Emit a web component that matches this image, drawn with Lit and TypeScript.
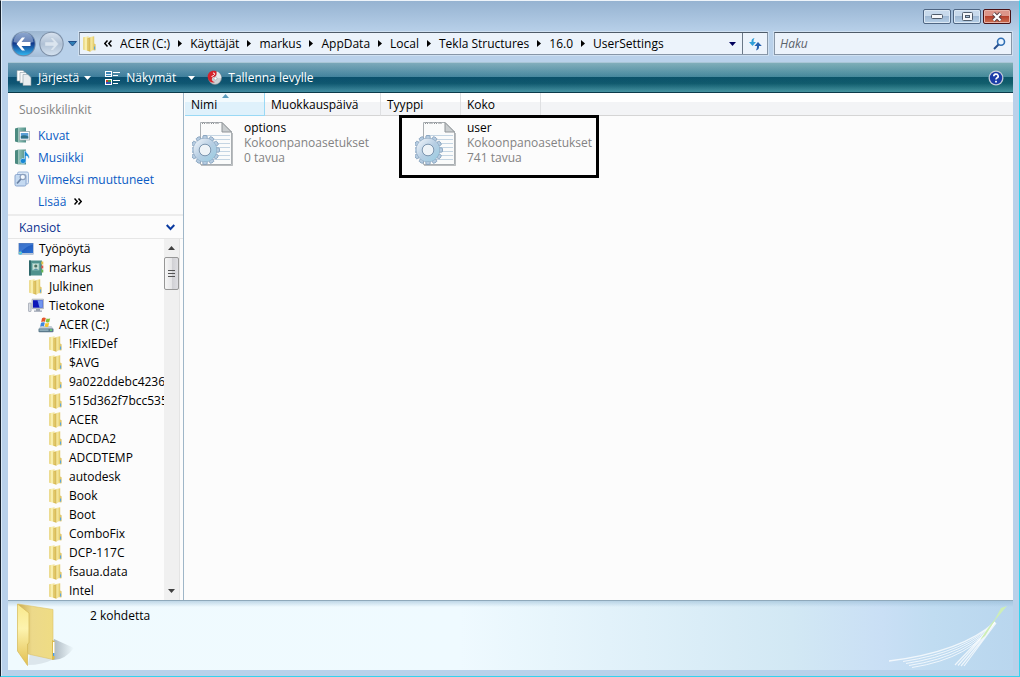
import { LitElement, html, svg, css, nothing } from "lit";
import { customElement, state } from "lit/decorators.js";
import { classMap } from "lit/directives/class-map.js";

interface TreeNode {
  label: string;
  level: number;
  icon: string;
}

interface FileEntry {
  name: string;
  type: string;
  size: string;
  marked: boolean;
}

const CRUMBS = ["ACER (C:)", "Käyttäjät", "markus", "AppData", "Local", "Tekla Structures", "16.0", "UserSettings"];

const folderNames = [
  "!FixIEDef", "$AVG", "9a022ddebc42365", "515d362f7bcc5357", "ACER", "ADCDA2", "ADCDTEMP",
  "autodesk", "Book", "Boot", "ComboFix", "DCP-117C", "fsaua.data", "Intel",
];

const TREE: TreeNode[] = [
  { label: "Työpöytä", level: 0, icon: "desktop" },
  { label: "markus", level: 1, icon: "user" },
  { label: "Julkinen", level: 1, icon: "folder" },
  { label: "Tietokone", level: 1, icon: "computer" },
  { label: "ACER (C:)", level: 2, icon: "drive" },
  ...folderNames.map((label) => ({ label, level: 3, icon: "folder" })),
];

const LINKS = [
  { label: "Kuvat", icon: "pictures" },
  { label: "Musiikki", icon: "music" },
  { label: "Viimeksi muuttuneet", icon: "recent" },
];

const FILES: FileEntry[] = [
  { name: "options", type: "Kokoonpanoasetukset", size: "0 tavua", marked: false },
  { name: "user", type: "Kokoonpanoasetukset", size: "741 tavua", marked: true },
];

const GLYPHS: Record<string, unknown> = {
  folder: svg`
    <path d="M1.2 1.2 L6.5 .3 V15 L1.2 13.8z" fill="url(#foldA)"/>
    <path d="M8 1 L12.200 .3 V13.500 L8 15.700z" fill="url(#foldB)"/>
    <path d="M5.500 2.200 L8.300 1.200 V15.700 L5.500 14.700z" fill="#d2b147"/>
    <path d="M6.500 2.400 L7.300 2.100 V14.800 L6.500 14.600z" fill="#eddb8a"/>
    <path d="M12 7.500 L13.600 8.300 V14.200 L11.600 14.600z" fill="#e0c66a"/>
    <path d="M12 10.500 h1.100 v3 h-1.100z" fill="#5aa7dd"/>`,
  desktop: svg`
    <rect x=".5" y="2" width="15" height="11.5" fill="#7790b8"/>
    <rect x="1" y="2.5" width="14" height="10" fill="url(#screen)"/>
    <path d="M1 12.5 C5 9 9 5 15 3.5 V2.5 H1z" fill="#5f9ae6" opacity=".45"/>
    <rect x="1" y="12" width="14" height="1.5" fill="#b9c5d6"/>
    <circle cx="2.5" cy="12" r="1.8" fill="#47c0e8"/><circle cx="2" cy="11.6" r=".7" fill="#f2d24a"/>`,
  user: svg`
    <rect x="1" y=".5" width="13" height="15" fill="#4f918d"/>
    <rect x="1" y=".5" width="2" height="15" fill="#2f686b"/>
    <rect x="4.500" y="3.500" width="6.500" height="6.500" fill="#c9dfd6" stroke="#8fc1bb" stroke-width=".8"/>
    <circle cx="7.800" cy="6" r="1.600" fill="#4a7262"/><path d="M5.5 10 Q8 6.8 10.2 10z" fill="#5d97a8"/>
    <rect x="13.300" y="1.5" width="2" height="3" fill="#e8c24a"/>
    <rect x="13.300" y="5.5" width="2" height="3" fill="#d95a4a"/>
    <rect x="13.300" y="9.5" width="2" height="3" fill="#67b654"/>`,
  computer: svg`
    <rect x=".5" y="5" width="2.600" height="8.500" rx=".6" fill="#d7dbe2" stroke="#8a92a0" stroke-width=".6"/>
    <rect x="4" y="1.200" width="11.700" height="9.500" rx=".6" fill="#d3d6dd" stroke="#8a92a0" stroke-width=".6"/>
    <rect x="5" y="2.200" width="9.700" height="7.500" fill="#0d16b8"/>
    <path d="M9.500 2.200 H14.700 V9.700 H11.500z" fill="#6f95ee"/>
    <path d="M8 11 h4 v1.5 h2 v1.3 h-8 v-1.3 h2z" fill="#9ba3b1"/>`,
  drive: svg`
    <path d="M2.5 9 H13.5 L15.5 12 H.5z" fill="#c3cdd6"/>
    <rect x=".5" y="11.5" width="15" height="3.8" rx="1" fill="#5c7a8c"/>
    <rect x="1.5" y="12.4" width="9" height="1.4" fill="#98b6c4"/>
    <rect x="12" y="12.4" width="2" height="1.4" fill="#69e06a"/>
    <path d="M4 1.2 Q5.8 .1 7.8 1.1 L7 4.8 Q5.2 4 3.2 5z" fill="#e4552b"/>
    <path d="M8.5 1.4 Q10.2 2.3 12.2 1.3 L11.3 5 Q9.5 6 7.7 5.1z" fill="#86bf3a"/>
    <path d="M3 5.7 Q5 4.7 6.8 5.6 L6 9.3 Q4.2 8.5 2.2 9.5z" fill="#3e86dd"/>
    <path d="M7.5 5.9 Q9.2 6.8 11.2 5.8 L10.3 9.5 Q8.5 10.5 6.7 9.6z" fill="#f6c52c"/>`,
  pictures: svg`
    <path d="M1 1.5 L4.500 .5 V15.5 L1 14.5z" fill="#4b8a80"/>
    <path d="M4.500 .5 H12 V15.5 H4.500z" fill="url(#teal)"/>
    <rect x="5.5" y="4.5" width="10" height="8.5" fill="#fff" stroke="#9aa8ad" stroke-width=".8"/>
    <rect x="6.8" y="6" width="7.5" height="5.5" fill="#5b9fd6"/>
    <path d="M6.8 9.3 Q10 7.3 14.3 9.6 V11.5 H6.8z" fill="#2f6f86"/>`,
  music: svg`
    <path d="M1 1.5 L4.500 .5 V15.5 L1 14.5z" fill="#4b8a80"/>
    <path d="M4.500 .5 H12 V15.5 H4.500z" fill="url(#teal)"/>
    <path d="M10.500 2 H12 C12 4.500 15.300 4.800 15.300 8.500 L14.300 10 C14.300 7.500 13 7 12 7 V12 A2.900 2.500 0 1 1 10.500 9.800z" fill="#1787d4" stroke="#d9f0ff" stroke-width=".6"/>`,
  recent: svg`
    <rect x="3.500" y="1" width="11" height="12" rx="1.500" fill="#dbe8f7" stroke="#9db6d8"/>
    <rect x="1" y="3.500" width="11" height="11.500" rx="1.500" fill="#c5daf1" stroke="#8aa6cf"/>
    <circle cx="8.800" cy="6" r="2.700" fill="#f5faff" stroke="#8b9fbc" stroke-width="1.200"/>
    <path d="M6.900 8 L3 12.500" stroke="#6b82a4" stroke-width="1.800"/>`,
};

const glyph = (name: string) =>
  html`<svg class="glyph" viewBox="0 0 16 16" aria-hidden="true">${GLYPHS[name]}</svg>`;

const teeth = Array.from({ length: 12 }, (_, i) =>
  svg`<rect x="10.800" y="15.500" width="4.400" height="5" rx="1.200" transform="rotate(${i * 30} 13 30)"/>`);

const configIcon = html`<svg class="config" viewBox="0 0 42 46" aria-hidden="true">
  <path d="M8.500 2.500 H30 L39.500 12 V44.500 H8.500z" fill="#fafbfb" stroke="#a9aeb2"/>
  <path d="M9 45.500 H40.500 V13" fill="none" stroke="#777d82" stroke-opacity=".5"/>
  <path d="M11 15.500 H38 M11 19.500 H38 M11 23.500 H38 M11 27.500 H38 M11 31.500 H38 M11 35.500 H38 M11 39.500 H38" stroke="#c4d5e3"/>
  <path d="M30 2.500 V12 H39.500z" fill="#c9cdcf" stroke="#8f9498"/>
  <path d="M10 4 q1.500 -3 3 0 m1.500 0 q1.500 -3 3 0 m1.500 0 q1.500 -3 3 0 m1.500 0 q1.500 -3 3 0" fill="none" stroke="#8b9094"/>
  <g fill="#b5cbe0" stroke="#7f9cb9" stroke-width=".8">${teeth}</g>
  <circle cx="13" cy="30" r="8.800" fill="none" stroke="#8aa4be" stroke-width="6.200"/>
  <circle cx="13" cy="30" r="8.800" fill="none" stroke="url(#gear)" stroke-width="5.400"/>
  <circle cx="13" cy="30" r="5.800" fill="#eef3f7" stroke="#7e97b0"/>
</svg>`;

const chevrons = (flip: boolean) =>
  html`<svg width="8" height="7" viewBox="0 0 8 7" aria-hidden="true">
    <path d=${flip ? "M3.500 .5 L.8 3.500 L3.500 6.500 M7.500 .5 L4.800 3.500 L7.500 6.500" : "M.5 .5 L3.200 3.500 L.5 6.500 M4.500 .5 L7.200 3.500 L4.500 6.500"} fill="none" stroke="#000" stroke-width="1.500"/>
  </svg>`;

@customElement("app-root")
export class AppRoot extends LitElement {
  @state() private query = "";

  static styles = css`
    :host {
      display: flex;
      flex-direction: column;
      box-sizing: border-box;
      height: 100vh;
      min-height: 320px;
      overflow: hidden;
      background: linear-gradient(#96b3d1, #b9d1ea 32px);
      border: 1px solid #35d3ee;
      border-top-color: #eef4fa;
      border-left-color: #16202c;
      box-shadow: inset 1px 0 #dcebf8;
      padding: 0 6px 6px 7px;
      font: 12px/15px "Open Sans", "Noto Sans", sans-serif;
      color: #000;
    }
    * { box-sizing: border-box; }
    button {
      font: inherit;
      color: inherit;
      background: none;
      border: 0;
      padding: 0;
      margin: 0;
    }
    svg { display: block; flex: none; }
    .defs { width: 0; height: 0; }
    .glyph { width: 16px; height: 16px; }

    .caption { display: flex; justify-content: flex-end; gap: 2px; height: 30px; padding: 8px 2px 0 0; }
    .sys {
      display: grid;
      place-items: center;
      width: 28px;
      height: 15px;
      border: 1px solid #4f6683;
      border-radius: 2px;
      background: linear-gradient(#c8daec 50%, #9fb9d4 50%, #b7d0e8);
      box-shadow: inset 0 0 0 1px #dbe8f4;
    }
    .close {
      border-color: #4a1216;
      background: linear-gradient(#dc9589 50%, #b5402c 50%, #cd7052);
      box-shadow: inset 0 0 0 1px #e8b3a8;
    }

    .nav { display: flex; align-items: center; height: 24px; margin-right: 1px; padding-top: 1px; }
    .travel { display: flex; align-items: center; width: 71px; gap: 4px; padding-left: 3px; }
    .orbs { display: flex; gap: 3px; border-radius: 13px; background: linear-gradient(#9db6d0, #b9d1ea 60%, #a4bcd6); }
    .address {
      display: flex;
      align-items: center;
      flex: 1;
      min-width: 0;
      height: 23px;
      border: 1px solid #8796a7;
      border-top-color: #4e5b69;
      background: #ecf3fb;
      padding-left: 2px;
      box-shadow: 0 0 0 1px #cfe0f1;
    }
    .back-list { margin: 0 8px 0 6px; }
    .crumbs { display: flex; align-items: center; flex: 1; min-width: 0; overflow: hidden; gap: 8px; }
    .crumb { display: flex; align-items: center; gap: 8px; flex: none; white-space: nowrap; }
    .history { width: 20px; height: 21px; display: grid; place-items: center; }
    .refresh { width: 25px; height: 21px; border-left: 1px solid #6a7887; display: grid; place-items: center; }
    .search {
      display: flex;
      align-items: center;
      width: 238px;
      height: 23px;
      margin-left: 6px;
      border: 1px solid #8796a7;
      border-top-color: #4e5b69;
      background: #ecf3fb;
      padding: 0 5px;
      box-shadow: 0 0 0 1px #cfe0f1;
    }
    .search input {
      flex: 1;
      min-width: 0;
      border: 0;
      outline: 0;
      padding: 0;
      background: none;
      font: italic 12px/15px "Open Sans", "Noto Sans", sans-serif;
    }
    .search input::placeholder { color: #5b626a; opacity: 1; }

    .toolbar {
      display: flex;
      align-items: center;
      height: 31px;
      margin-top: 7px;
      padding: 0 9px 0 8px;
      color: #fff;
      border-top: 1px solid #a9c6d6;
      border-bottom: 1px solid #0b3a4a;
      background:
        linear-gradient(90deg, #0a4a8a40, #0a4a8a10 50%, #1a7f6a20),
        linear-gradient(#8bb5c0, #4a8ba0 48%, #0a5068 48%, #10596c 70%, #4b97a4);
      text-shadow: 0 1px 2px #02303f;
    }
    .tool { display: flex; align-items: center; gap: 6px; }
    .tool .caret { margin-left: -1px; }
    .organize { margin-right: 14px; }
    .views { margin-right: 12px; }
    .views .caret { margin-left: 6px; }
    .help { margin-left: auto; }

    .body { display: flex; flex: 1; min-height: 0; background: #fcfcfc; }
    .side { display: flex; flex-direction: column; width: 176px; flex: none; border-right: 1px solid #9fb6c8; }
    .fav-title { margin: 0; padding: 9px 11px 7px; font-size: 12px; font-weight: 400; color: #838383; }
    .links { display: flex; flex-direction: column; padding: 0 0 2px 6px; margin: 0; }
    .link { display: flex; align-items: center; gap: 8px; height: 22px; color: #0a5bc4; text-decoration: none; }
    .more { padding-left: 24px; }
    .folders {
      display: flex;
      align-items: center;
      justify-content: space-between;
      height: 25px;
      padding: 0 8px 0 11px;
      border-top: 2px solid #ececec;
      border-bottom: 1px solid #e6e6e6;
      color: #0a2f8f;
    }
    .tree-wrap { display: flex; flex: 1; min-height: 0; padding-right: 3px; }
    .tree { flex: 1; min-width: 0; overflow: hidden; margin: 0; padding: 0 0 0 10px; list-style: none; }
    .node { display: flex; align-items: center; gap: 5px; height: 19px; white-space: nowrap; }
    .level1 { padding-left: 10px; }
    .level2 { padding-left: 20px; }
    .level3 { padding-left: 30px; }
    .scroll { display: flex; flex-direction: column; width: 16px; background: #f0f0f0; border-right: 1px solid #e4e4e4; }
    .step { height: 18px; display: grid; place-items: center; }
    .thumb {
      height: 33px;
      border: 1px solid #979797;
      border-radius: 2px;
      background: linear-gradient(90deg, #f6f6f6, #e6e6e8 50%, #cfcfd3 50%, #dedee2);
      display: grid;
      place-items: center;
    }
    .down { margin-top: auto; }

    .main { flex: 1; min-width: 0; padding-left: 1px; }
    .heads { width: 100%; table-layout: fixed; border-collapse: separate; border-spacing: 0; }
    .heads th {
      height: 23px;
      padding: 0 6px;
      text-align: left;
      font-weight: 400;
      border-bottom: 1px solid #d5d5d5;
      border-right: 1px solid #dfe0e2;
      background: linear-gradient(#fff 40%, #f3f4f6 40%);
    }
    .heads .rest { border-right: 0; }
    .heads .sorted {
      position: relative;
      background: linear-gradient(#f3fafd 40%, #dff1fb 40%);
      border-color: #9ad9f5;
    }
    .sort { position: absolute; top: 1px; left: 50%; margin-left: -3px; }
    .c80 { width: 80px; }
    .c116 { width: 116px; }
    .files { display: flex; flex-wrap: wrap; gap: 45px; margin: 0; padding: 4px 7px; list-style: none; }
    .file { position: relative; display: flex; gap: 10px; width: 178px; }
    .config { width: 42px; height: 46px; }
    .meta { color: #838383; white-space: nowrap; }
    .name { color: #000; }
    .frame { position: absolute; inset: -5px -6px -12px -16px; border: 3px solid #000; pointer-events: none; }

    .details {
      display: flex;
      align-items: flex-start;
      height: 70px;
      border-top: 1px solid #8fa9bb;
      background:
        linear-gradient(#8fb4d080, #8fb4d000 6px),
        linear-gradient(90deg, #f0fafe, #effaff 45%, #d2e8f4 78%, #c9dff5 87%, #c0dcf1 92%, #b9d6ee);
    }
    .count { margin: 7px auto 0 12px; }
    .big-folder { margin: 2px 0 0 8px; }
    .swoosh { margin: 5px 3px 0 0; }
  `;

  private down(color: string, cls = "") {
    return html`<svg class=${cls} width="7" height="4" viewBox="0 0 7 4" aria-hidden="true"><path d="M0 0 H7 L3.500 4z" fill=${color}/></svg>`;
  }

  private renderNav() {
    return html`
      <nav class="nav">
        <div class="travel">
          <div class="orbs">
            <button aria-label="Takaisin">
              <svg width="25" height="26" viewBox="0 0 25 26">
                <circle cx="12.500" cy="13" r="12.200" fill="#6f88a8"/>
                <circle cx="12.500" cy="13" r="11.200" fill="url(#orb)"/>
                <path d="M2.500 11 A10 10 0 0 1 22.500 11 Q12.500 14 2.500 11z" fill="#fff" opacity=".35"/>
                <path d="M11 6.500 H14 L10.500 11 H19.500 V15 H10.500 L14 19.500 H11 L5.500 13z" fill="#fff"/>
              </svg>
            </button>
            <button aria-label="Eteenpäin">
              <svg width="25" height="26" viewBox="0 0 25 26">
                <circle cx="12.500" cy="13" r="12.200" fill="#7d8fa6"/>
                <circle cx="12.500" cy="13" r="11.200" fill="url(#orbOff)"/>
                <path d="M11 6.500 H14 L19.500 13 L14 19.500 H11 L14.500 15 H6 V11 H14.500z" fill="#dbe5ef" stroke="#b9c8d8" stroke-width=".5"/>
              </svg>
            </button>
          </div>
          <button aria-label="Viimeisimmät sivut">
            <svg width="9" height="6" viewBox="0 0 9 6"><path d="M.5 .5 H8.500 L4.500 5z" fill="#2f7fb5" stroke="#23508a"/></svg>
          </button>
        </div>
        <div class="address">
          ${glyph("folder")}
          <button class="back-list" aria-label="Edelliset">${chevrons(true)}</button>
          <div class="crumbs">
            ${CRUMBS.map((name, i) => html`
              <span class="crumb">
                <button>${name}</button>
                ${i < CRUMBS.length - 1
                  ? html`<svg width="4" height="7" viewBox="0 0 4 7" aria-hidden="true"><path d="M0 0 L4 3.500 L0 7z"/></svg>`
                  : nothing}
              </span>`)}
          </div>
          <button class="history" aria-label="Osoitehistoria">${this.down("#00005c")}</button>
          <button class="refresh" aria-label="Päivitä">
            <svg width="14" height="14" viewBox="0 0 14 14">
              <path d="M6.500 1 Q3.200 1.500 3.500 5 H1 L4.500 9 L8 5 H5.500 Q5.200 3 6.500 1z" fill="#2f9fd8"/>
              <path d="M8 13.500 Q11.500 12.500 11 9 H13.800 L10 5 L6.500 9 H9 Q9.200 11.500 8 13.500z" fill="#2460b0"/>
            </svg>
          </button>
        </div>
        <label class="search">
          <input type="text" aria-label="Haku" placeholder="Haku" .value=${this.query}
            @input=${(e: Event) => { this.query = (e.target as HTMLInputElement).value; }}>
          <svg width="13" height="13" viewBox="0 0 13 13" aria-hidden="true">
            <circle cx="8" cy="4.700" r="3.500" fill="#e9f4ff" stroke="#2f6fb4" stroke-width="1.600"/>
            <path d="M5.500 7.500 L1 12" stroke="#274f8e" stroke-width="2"/>
          </svg>
        </label>
      </nav>`;
  }

  private renderToolbar() {
    return html`
      <div class="toolbar" role="toolbar">
        <button class="tool organize">
          <svg width="16" height="16" viewBox="0 0 16 16" aria-hidden="true">
            <path d="M1 .5 H7 L9 2.500 V11 H1z" fill="#fff" stroke="#8b9aa3" stroke-width=".6"/>
            <path d="M4 2.500 H9.500 L12 5 V13 H4z" fill="#f5f7f8" stroke="#8b9aa3" stroke-width=".6"/>
            <path d="M7 4.500 H12 L15 7.500 V15.500 H7z" fill="#e9edef" stroke="#8b9aa3" stroke-width=".6"/>
          </svg>
          <span>Järjestä</span>${this.down("#fff", "caret")}
        </button>
        <button class="tool views">
          <svg width="15" height="14" viewBox="0 0 15 14" aria-hidden="true">
            <rect width="7" height="6" fill="#fff"/><rect x="1" y="1" width="5" height="4" fill="#3a84b5"/><rect x="1" y="3" width="5" height="1" fill="#e7f3fa"/>
            <rect y="8" width="7" height="6" fill="#fff"/><rect x="1" y="9" width="2" height="2" fill="#d43b2b"/><rect x="3" y="9" width="3" height="2" fill="#3f9a3d"/><rect x="1" y="11" width="5" height="2" fill="#3552b8"/>
            <path d="M8 1.500 H15 M8 4.500 H13 M8 9.500 H15 M8 12.500 H13" stroke="#fff"/>
          </svg>
          <span>Näkymät</span>${this.down("#fff", "caret")}
        </button>
        <button class="tool">
          <svg width="15" height="15" viewBox="0 0 15 15" aria-hidden="true">
            <circle cx="8" cy="8" r="6.500" fill="#cfd3d6" stroke="#7d8488" stroke-width=".6"/>
            <path d="M10 1.500 Q14 3 14.300 8 L9 8z" fill="#e6e9ea"/>
            <path d="M9 1 C3.500 -.5 0 3.500 .8 8 C1.500 11.500 5 13.500 8 12 C4.500 11.500 4 8.500 6 7 C9 7.500 10.500 4 9 1z" fill="#d4232b"/>
            <path d="M6 3 q1.800 -.3 1.500 1.500 q-1 1.500 -3 2" stroke="#fff" fill="none"/>
            <circle cx="8.500" cy="8.500" r="1.500" fill="#fff" stroke="#9aa0a4" stroke-width=".6"/>
          </svg>
          <span>Tallenna levylle</span>
        </button>
        <button class="help" aria-label="Ohje">
          <svg width="16" height="16" viewBox="0 0 16 16">
            <circle cx="8" cy="8" r="7.500" fill="#c5ccd8"/><circle cx="8" cy="8" r="6.200" fill="#1b3da8"/>
            <path d="M5.800 6.200 A2.200 2 0 1 1 8.800 8 Q8 8.400 8 9.600" fill="none" stroke="#fff" stroke-width="1.600"/><rect x="7.100" y="10.800" width="1.800" height="1.700" fill="#fff"/>
          </svg>
        </button>
      </div>`;
  }

  private renderSide() {
    return html`
      <aside class="side">
        <h2 class="fav-title">Suosikkilinkit</h2>
        <div class="links">
          ${LINKS.map((l) => html`<a class="link" href="#">${glyph(l.icon)}<span>${l.label}</span></a>`)}
          <a class="link more" href="#"><span>Lisää</span>${chevrons(false)}</a>
        </div>
        <button class="folders">
          <span>Kansiot</span>
          <svg width="9" height="7" viewBox="0 0 9 7" aria-hidden="true"><path d="M.7 1 L4.500 5 L8.300 1" fill="none" stroke="#0a3aa0" stroke-width="2"/></svg>
        </button>
        <div class="tree-wrap">
          <ul class="tree">
            ${TREE.map((n) => html`
              <li class=${classMap({ node: true, level1: n.level === 1, level2: n.level === 2, level3: n.level === 3 })}>
                ${glyph(n.icon)}<span>${n.label}</span>
              </li>`)}
          </ul>
          <div class="scroll">
            <button class="step" aria-label="Vieritä ylös"><svg width="7" height="4" viewBox="0 0 7 4"><path d="M0 4 H7 L3.500 0z" fill="#404040"/></svg></button>
            <div class="thumb"><svg width="7" height="8" viewBox="0 0 7 8"><path d="M0 .5 H7 M0 3.500 H7 M0 6.500 H7" stroke="#555"/></svg></div>
            <button class="step down" aria-label="Vieritä alas">${this.down("#404040")}</button>
          </div>
        </div>
      </aside>`;
  }

  render() {
    return html`
      <svg class="defs" aria-hidden="true"><defs>
        <linearGradient id="foldA"><stop offset="0" stop-color="#e6cf6e"/><stop offset=".5" stop-color="#fbf3b8"/><stop offset="1" stop-color="#efdc86"/></linearGradient>
        <linearGradient id="foldB"><stop offset="0" stop-color="#f8efb0"/><stop offset=".6" stop-color="#efdd8a"/><stop offset="1" stop-color="#dfc562"/></linearGradient>
        <linearGradient id="screen" x2="1" y2="1"><stop offset="0" stop-color="#1c4fae"/><stop offset="1" stop-color="#2b6fd4"/></linearGradient>
        <linearGradient id="teal"><stop offset="0" stop-color="#8fc0b4"/><stop offset="1" stop-color="#4f8f88"/></linearGradient>
        <linearGradient id="gear" x2="1" y2="1"><stop offset="0" stop-color="#e6eef6"/><stop offset=".5" stop-color="#b7cee3"/><stop offset="1" stop-color="#9fcde2"/></linearGradient>
        <linearGradient id="orb" x2="0" y2="1"><stop offset="0" stop-color="#4a74b4"/><stop offset=".48" stop-color="#123a8c"/><stop offset="1" stop-color="#2fb4ee"/></linearGradient>
        <linearGradient id="orbOff" x2="0" y2="1"><stop offset="0" stop-color="#d6e1ee"/><stop offset=".5" stop-color="#b0c1d5"/><stop offset="1" stop-color="#d3e1ef"/></linearGradient>
        <linearGradient id="bigBack"><stop offset="0" stop-color="#c9ab55"/><stop offset=".4" stop-color="#ecd98a"/><stop offset="1" stop-color="#efdc84"/></linearGradient>
        <linearGradient id="bigFront" x2="0" y2="1"><stop offset="0" stop-color="#f8e88c"/><stop offset=".4" stop-color="#fdf3ae"/><stop offset="1" stop-color="#e2bf50"/></linearGradient>
        <linearGradient id="shade"><stop offset="0" stop-color="#6d7a86" stop-opacity=".55"/><stop offset="1" stop-color="#6d7a86" stop-opacity="0"/></linearGradient>
      </defs></svg>
      <header class="caption">
        <button class="sys" aria-label="Pienennä"><svg width="12" height="5" viewBox="0 0 12 5"><rect x=".5" y=".5" width="11" height="4" rx="1" fill="#f6f8fa" stroke="#4f5c6b"/></svg></button>
        <button class="sys" aria-label="Suurenna"><svg width="11" height="9" viewBox="0 0 11 9"><rect x=".5" y=".5" width="10" height="8" rx="1" fill="#f6f8fa" stroke="#4f5c6b"/><rect x="3.500" y="3.500" width="4" height="2" fill="#a9c0d8" stroke="#4f5c6b"/></svg></button>
        <button class="sys close" aria-label="Sulje"><svg width="12" height="10" viewBox="0 0 12 10"><path d="M2.500 1.500 L9.500 8.500 M9.500 1.500 L2.500 8.500" stroke="#5a4044" stroke-width="4"/><path d="M2.500 1.500 L9.500 8.500 M9.500 1.500 L2.500 8.500" stroke="#fff" stroke-width="2.200"/></svg></button>
      </header>
      ${this.renderNav()}
      ${this.renderToolbar()}
      <div class="body">
        ${this.renderSide()}
        <main class="main">
          <table class="heads">
            <thead><tr>
              <th class="sorted c80">Nimi<svg class="sort" width="7" height="4" viewBox="0 0 7 4" aria-hidden="true"><path d="M0 4 H7 L3.500 0z" fill="#5b9cbd"/></svg></th>
              <th class="c116">Muokkauspäivä</th>
              <th class="c80">Tyyppi</th>
              <th class="c80">Koko</th>
              <th class="rest"></th>
            </tr></thead>
          </table>
          <ul class="files">
            ${FILES.map((f) => html`
              <li class="file">
                ${configIcon}
                <div class="meta"><div class="name">${f.name}</div><div>${f.type}</div><div>${f.size}</div></div>
                ${f.marked ? html`<div class="frame"></div>` : nothing}
              </li>`)}
          </ul>
        </main>
      </div>
      <footer class="details">
        <svg class="big-folder" width="62" height="64" viewBox="0 0 62 64" aria-hidden="true">
          <path d="M38 36 L58 45 Q48 58 36 57z" fill="url(#shade)"/>
          <path d="M14 50 L38 56 Q26 62 12 62z" fill="#6d7a86" opacity=".15"/>
          <path d="M2 1 L37 6.500 V56.500 L12 51z" fill="url(#bigBack)" stroke="#dcc26a" stroke-width=".6"/>
          <path d="M36 37 L38.500 38 V56 L36 57z" fill="#dcbc4e"/><path d="M37 39 h1.500 v14 h-1.500z" fill="#fff"/><path d="M37 50 h1.500 v3 h-1.500z" fill="#4b9be6"/>
          <path d="M1.500 1 L13 10 V40 L11.500 41 V62.500 L1.500 48z" fill="url(#bigFront)" stroke="#d6b955" stroke-width=".7"/>
        </svg>
        <div class="count">2 kohdetta</div>
        <svg class="swoosh" width="122" height="62" viewBox="0 0 122 62" aria-hidden="true">
          <g fill="none" stroke="#fff" stroke-opacity=".75">
            <path d="M1 55 Q74 46 107 16" stroke-width="1.500"/><path d="M15 55.500 Q78 46 107 16"/><path d="M18 57.500 Q80 48 107 16"/><path d="M21 59.500 Q82 50 107 16"/><path d="M24 61.500 Q84 52 107 16"/>
            <path d="M67 59 L107 17 M70 59.500 L107 17 M73 60 L108 17 M76 60 L108 17" stroke-width="1.200"/>
          </g>
          <path d="M113 2 L119 0 L108 13 L97 30 L92 34 Q101 20 107 13z" fill="#cdeeb6"/>
        </svg>
      </footer>`;
  }
}
